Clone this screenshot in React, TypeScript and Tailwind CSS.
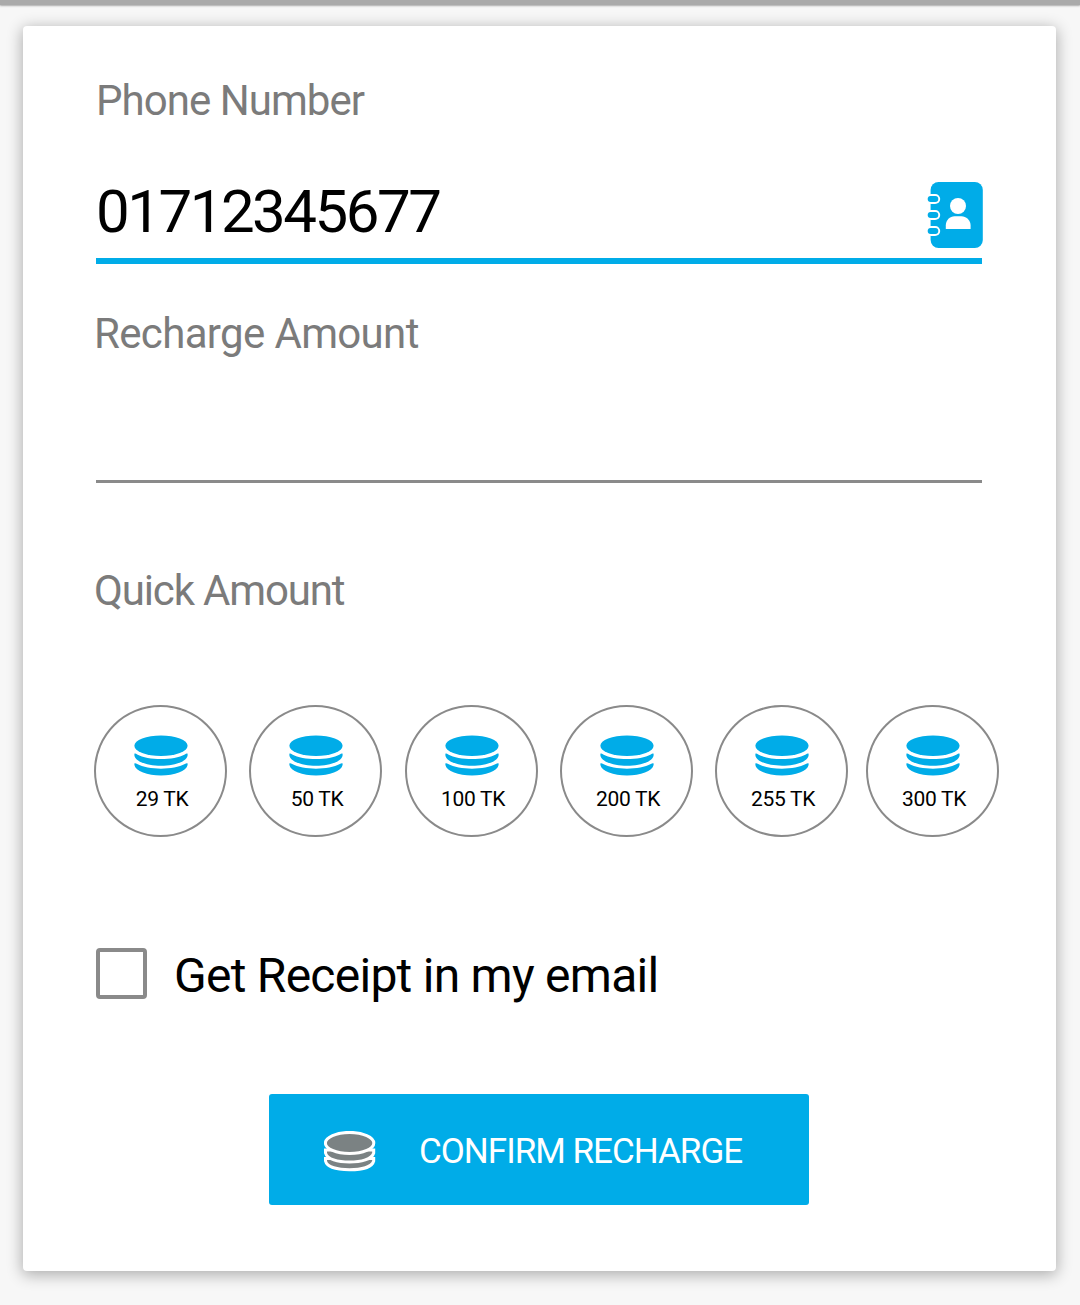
import React from "react";

function Coins({ className }: { className: string }) {
  return (
    <svg className={className} viewBox="0 0 54 41" fill="currentColor" aria-hidden="true">
      <ellipse cx="27" cy="10.8" rx="26.6" ry="10.3" />
      <path d="M0.4 18.8C1 18.3 2 18.6 3.2 19.5C14 25.6 40 25.6 50.8 19.5C52 18.600 53 18.300 53.600 18.800V20.400C52.500 26.800 40.500 30.700 27 30.700S1.500 26.800 0.400 20.400Z" />
      <path d="M0.4 28.4C1 27.9 2 28.200 3.200 29.100C14 35.300 40 35.300 50.800 29.100C52 28.200 53 27.900 53.600 28.400V30C52.500 36.400 40.500 40.400 27 40.400S1.500 36.400 0.400 30Z" />
    </svg>
  );
}

function OutlinedCoins() {
  return (
    <svg className="h-[41px] w-[52px]" viewBox="0 0 52 41" aria-hidden="true">
      <g fill="#7b8283" stroke="#fff" strokeWidth="3">
        <path d="M1.500 27.500V30C3 36.300 14 38.800 25.500 38.800S48 36.300 49.700 30V27.500Z" />
        <path d="M1.500 19V22C3 28.300 14 31.100 25.500 31.100S48 28.300 49.700 22V19Z" />
        <ellipse cx="25.600" cy="12" rx="24.200" ry="10.600" />
      </g>
    </svg>
  );
}

function ContactBook() {
  return (
    <svg className="mt-1 -mr-px h-[66px] w-14 shrink-0" viewBox="0 0 56 66" aria-hidden="true">
      <rect x="3.600" y="0" width="52.200" height="66" rx="8" fill="#00ace8" />
      {[17, 33, 49].map((y) => (
        <g key={y}>
          <rect x="-1" y={y - 5.1} width="14.200" height="10.200" rx="5.100" fill="#fff" />
          <rect x="0.700" y={y - 2.9} width="10.600" height="5.800" rx="2.900" fill="#00ace8" />
        </g>
      ))}
      <circle cx="31" cy="24" r="8" fill="#fff" />
      <path d="M18.800 47V43.500C18.800 38 23 34.200 27.500 34.200H34.500C39 34.200 43.600 38 43.600 43.500V47Z" fill="#fff" />
    </svg>
  );
}

const amounts = [
  { label: "29 TK", gap: "" },
  { label: "50 TK", gap: "ml-[22px]" },
  { label: "100 TK", gap: "ml-[23px]" },
  { label: "200 TK", gap: "ml-[22px]" },
  { label: "255 TK", gap: "ml-[22px]" },
  { label: "300 TK", gap: "ml-[18px]" },
];

export default function App() {
  return (
    <div className="h-[1305px] w-[1080px] overflow-hidden bg-[#f7f7f7] font-['Roboto',sans-serif] text-black">
      <div className="h-[5px] bg-[#aaa] shadow-[0_1px_2px_#aaa]" />
      <main className="mt-[21px] ml-[23px] h-[1245px] w-[1033px] rounded bg-white pt-[51px] pr-[74px] pl-[73px] shadow-[0_3px_15px_1px_rgba(0,0,0,0.3)]">
        <label className="block text-[42px] leading-[48px] tracking-[-0.95px] text-[#7b7b7b]">Phone Number</label>
        <div className="mt-[53px] flex h-[86px] justify-between border-b-[6px] border-[#00ace8]">
          <span className="text-[60px] leading-[67px] tracking-[-2.5px]">01712345677</span>
          <ContactBook />
        </div>
        <label className="mt-[46px] -ml-0.5 block text-[42px] leading-[48px] tracking-[-0.65px] text-[#7b7b7b]">Recharge Amount</label>
        <div className="h-[125px] border-b-[3px] border-[#8a8a8a]" />
        <h2 className="mt-[84px] -ml-0.5 text-[42px] leading-[48px] tracking-[-1.15px] text-[#7b7b7b]">Quick Amount</h2>
        <div className="mt-[90px] -mr-5 -ml-0.5 flex">
          {amounts.map(({ label, gap }) => (
            <button key={label} className={`flex h-[132px] w-[133px] shrink-0 flex-col items-center rounded-[50%] border-2 border-[#8a8a8a] pt-7 ${gap}`}>
              <Coins className="h-[41px] w-[54px] text-[#00ace8]" />
              <span className="mt-[11px] pl-[3px] text-[21px] leading-6 tracking-[-0.3px]">{label}</span>
            </button>
          ))}
        </div>
        <div className="mt-[111px] flex h-[51px] items-center">
          <span className="size-[51px] rounded border-4 border-[#8a8a8a]" />
          <span className="ml-[27px] pt-1 text-[48px] leading-[52px] tracking-[-0.74px]">Get Receipt in my email</span>
        </div>
        <button className="mt-[95px] ml-[173px] flex h-[111px] w-[540px] items-center rounded-[3px] bg-[#00ace8] pt-1 pl-[55px] text-white">
          <OutlinedCoins />
          <span className="ml-[43px] pt-px text-[35px] leading-10 tracking-[-1px]">CONFIRM RECHARGE</span>
        </button>
      </main>
    </div>
  );
}
